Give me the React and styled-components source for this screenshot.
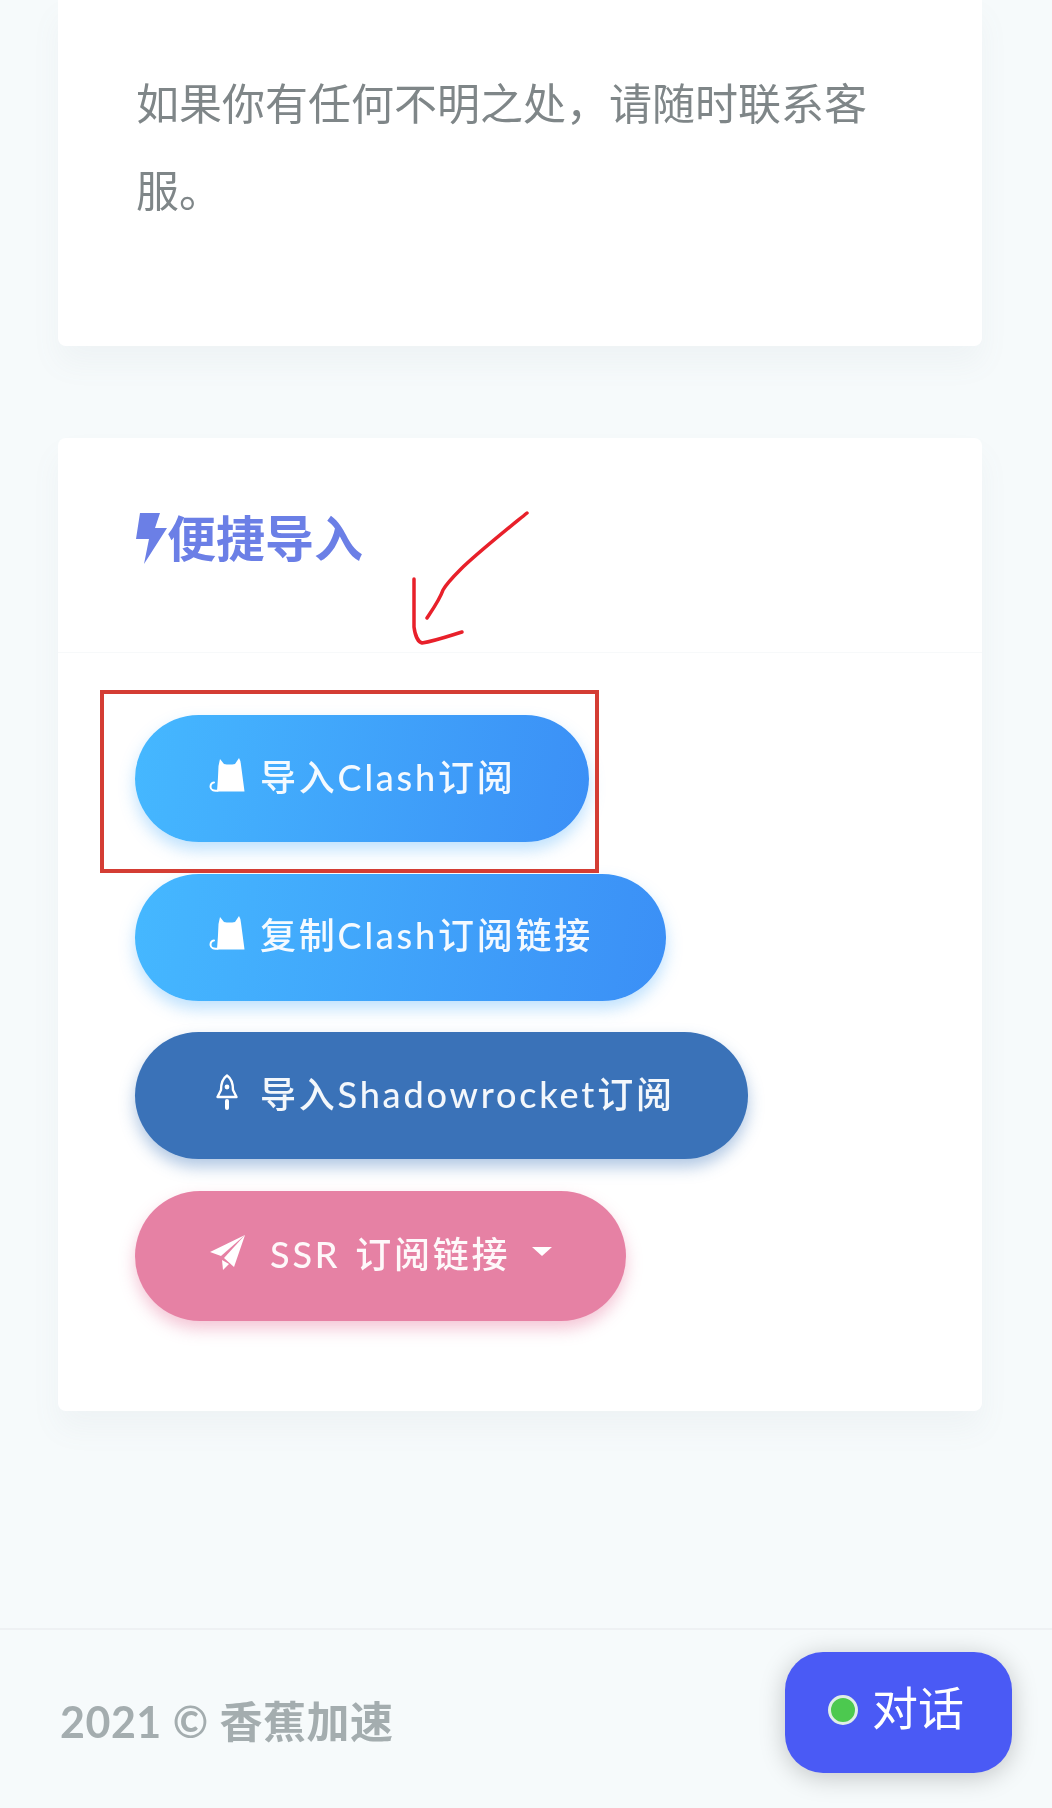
import React from 'react'
import styled, { createGlobalStyle } from 'styled-components'

const GlobalStyle = createGlobalStyle`
  html, body {
    margin: 0;
    padding: 0;
    background: #f6fafb;
  }
  * { box-sizing: border-box; }
`

const Page = styled.div`
  position: relative;
  width: 1052px;
  height: 1808px;
  overflow: hidden;
  background: #f6fafb;
  font-family: "Lato", "Noto Sans CJK SC", sans-serif;
`

const Blurred = styled.div`
  filter: blur(0.7px);
`

const Main = styled.main`
  height: 1628px;
  padding: 0 70px 0 58px;
  display: flex;
  flex-direction: column;
  gap: 92px;
`

const Card = styled.section`
  background: #fff;
  border-radius: 8px;
  box-shadow: 0 18px 30px rgba(120, 135, 145, 0.06);
`

const NoticeCard = styled(Card)`
  height: 346px;
  padding: 60px 78px 0;
  border-radius: 0 0 8px 8px;
`

const Notice = styled.p`
  margin: 0;
  font-size: 43px;
  line-height: 87px;
  color: #7f8688;
`

const CardHeader = styled.header`
  height: 215px;
  padding: 72px 78px 0;
  border-bottom: 1px solid #f7f9fa;
`

const Title = styled.h3`
  margin: 0;
  display: flex;
  align-items: center;
  font-size: 49px;
  line-height: 56px;
  font-weight: 700;
  color: #6b7fe6;
`

const CardBody = styled.div`
  height: 758px;
  padding: 62px 77px 0;
  display: flex;
  flex-direction: column;
  align-items: flex-start;
  gap: 31.5px;
`

const PillButton = styled.button`
  height: ${p => p.$height || 127}px;
  padding: 0 ${p => p.$end || 73}px 8px 74px;
  border: 0;
  border-radius: 66px;
  display: inline-flex;
  align-items: center;
  font-family: inherit;
  font-size: 36px;
  font-weight: 500;
  letter-spacing: 2.8px;
  word-spacing: 3px;
  white-space: nowrap;
  color: rgba(255, 255, 255, 0.94);
  background: ${p => p.$bg};
  box-shadow: 0 8px 16px ${p => p.$glow};
`

const IconSlot = styled.span`
  width: 36px;
  margin-right: ${p => p.$gap || 15}px;
  display: inline-flex;
  align-items: center;
  justify-content: center;
  flex: none;
`

const Caret = styled.i`
  width: 0;
  height: 0;
  margin-left: 22px;
  border-left: 10px solid transparent;
  border-right: 10px solid transparent;
  border-top: 9px solid #fff;
`

const Footer = styled.footer`
  height: 180px;
  padding: 0 60px;
  border-top: 2px solid #eef1f3;
  display: flex;
  align-items: center;
  font-size: 43px;
  letter-spacing: 0.5px;
  font-weight: 700;
  color: #a4adaf;
`

const ChatButton = styled.div`
  position: absolute;
  left: 785px;
  top: 1652px;
  width: 227px;
  height: 121px;
  border-radius: 38px;
  background: #4a5af5;
  box-shadow: 0 4px 26px rgba(0, 0, 0, 0.22);
  display: flex;
  align-items: center;
  padding: 0 0 6px 43px;
  gap: 14px;
  color: #fff;
  font-size: 46px;
`

const ChatLabel = styled.span`
  margin-top: -9px;
`

const StatusDot = styled.span`
  width: 30px;
  height: 30px;
  border-radius: 50%;
  background: #4cc94f;
  border: 3px solid #dfeee6;
`

const RedBox = styled.div`
  position: absolute;
  left: 100px;
  top: 690px;
  width: 499px;
  height: 183px;
  border: 4px solid #d43d34;
`

const Arrow = styled.svg`
  position: absolute;
  left: 405px;
  top: 505px;
  width: 130px;
  height: 150px;
`

const BoltIcon = () => (
  <svg width="31" height="51" viewBox="0 0 31 51" fill="#6b7fe6" style={{ flex: 'none' }}>
    <path d="M4 0 L24 0 L19 15 L31 15 L8 51 L13 26 L0 26 Z" />
  </svg>
)

const CatIcon = () => (
  <svg width="36" height="34" viewBox="0 0 36 34" fill="none">
    <path d="M11 1 L15 6 Q20.500 7 26 6 L30 0 Q31.500 2 32 7 L35.500 33.500 L8 33.500 Q9 22 9.500 8 Z" fill="#fff" />
    <path d="M9 32.500 Q2 33.500 1.500 29 Q1.500 25 5 24.500" stroke="#fff" strokeWidth="2" strokeLinecap="round" />
  </svg>
)

const RocketIcon = () => (
  <svg width="22" height="36" viewBox="0 0 22 36" fill="none" stroke="#fff" strokeWidth="2.400" strokeLinejoin="round">
    <path d="M11 1.500 C6 5 5 10 5 16 L1.500 23 L20.500 23 L17 16 C17 10 16 5 11 1.500 Z" />
    <circle cx="11" cy="13" r="2.400" fill="#fff" stroke="none" />
    <path d="M11 27 L11 34" strokeWidth="4" strokeLinecap="round" />
  </svg>
)

const PlaneIcon = () => (
  <svg width="36" height="36" viewBox="0 0 36 36" fill="#fff">
    <path d="M36 1 L1 18 L12 22 Z" />
    <path d="M36 1 L15 24 L25 33 Z" />
    <path d="M13 26 L14 36 L20 30 Z" />
  </svg>
)

const buttons = [
  { label: '导入Clash订阅', icon: <CatIcon />, bg: 'linear-gradient(100deg, #45b8ff, #3b8ff6)', glow: 'rgba(70, 170, 250, 0.35)' },
  { label: '复制Clash订阅链接', icon: <CatIcon />, bg: 'linear-gradient(100deg, #45b8ff, #3b8ff6)', glow: 'rgba(70, 170, 250, 0.35)' },
  { label: '导入Shadowrocket订阅', icon: <RocketIcon />, bg: '#3a72b8', glow: 'rgba(58, 114, 184, 0.4)' },
]

export default function App() {
  return (
    <Page>
      <GlobalStyle />
      <Blurred>
        <Main>
          <NoticeCard>
            <Notice>如果你有任何不明之处，请随时联系客服。</Notice>
          </NoticeCard>
          <Card>
            <CardHeader>
              <Title><BoltIcon />便捷导入</Title>
            </CardHeader>
            <CardBody>
              {buttons.map(b => (
                <PillButton key={b.label} $bg={b.bg} $glow={b.glow}>
                  <IconSlot>{b.icon}</IconSlot>
                  {b.label}
                </PillButton>
              ))}
              <PillButton $height={130} $end={74} $bg="#e681a4" $glow="rgba(230, 129, 164, 0.45)">
                <IconSlot $gap={25}><PlaneIcon /></IconSlot>
                SSR 订阅链接
                <Caret />
              </PillButton>
            </CardBody>
          </Card>
        </Main>
        <Footer>2021 © 香蕉加速</Footer>
        <ChatButton>
          <StatusDot />
          <ChatLabel>对话</ChatLabel>
        </ChatButton>
      </Blurred>
      <RedBox />
      <Arrow viewBox="0 0 130 150" fill="none" stroke="#e8202a" strokeWidth="3.500" strokeLinecap="round" strokeLinejoin="round">
        <path d="M122 8 C95 30 70 50 55 65 C48 72 42 78 38 85 C35 94 28 104 22 113" />
        <path d="M9 74 L9 122 C10 130 13 137 17 138 C30 136 44 131 57 127" />
      </Arrow>
    </Page>
  )
}
